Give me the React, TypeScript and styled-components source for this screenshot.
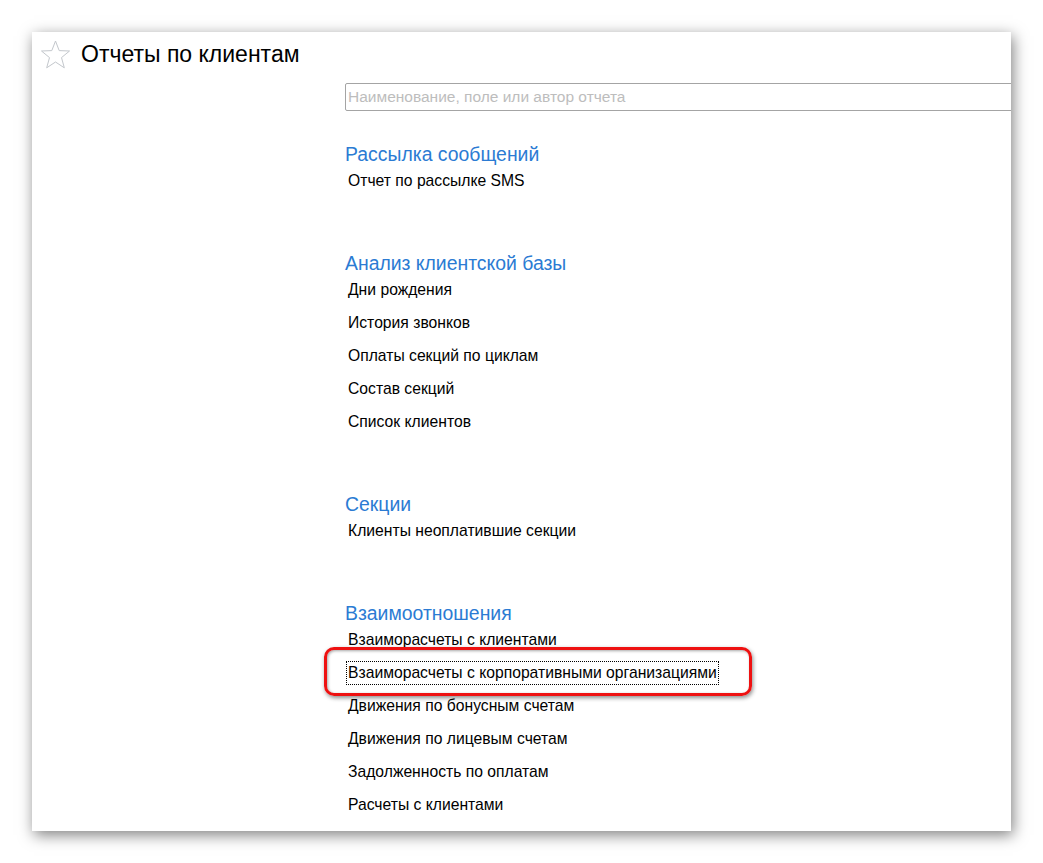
import React from "react";
import styled, { createGlobalStyle } from "styled-components";

const Global = createGlobalStyle`
  html, body { margin: 0; padding: 0; background: #fff; }
  body { font-family: "Liberation Sans", Arial, sans-serif; }
  * { box-sizing: border-box; }
`;

const Page = styled.div`
  width: 1043px;
  height: 863px;
  padding: 32px 0 0 32px;
  background: #fff;
`;

const Panel = styled.div`
  width: 979px;
  height: 799px;
  background: #fff;
  box-shadow: 2px 4px 14px rgba(0, 0, 0, 0.5);
  overflow: hidden;
  display: flex;
  flex-direction: column;
`;

const TitleBar = styled.div`
  display: flex;
  align-items: center;
  gap: 10px;
  height: 44px;
  padding: 0 0 0 8px;
`;

const Title = styled.h1`
  margin: 0;
  font-size: 23px;
  font-weight: normal;
  color: #000;
  line-height: 44px;
`;

const Content = styled.div`
  display: flex;
  flex-direction: column;
  padding-left: 313px;
  padding-top: 7px;
`;

const Search = styled.input`
  width: 700px;
  height: 28px;
  border: 1px solid #a4a4a4;
  border-radius: 2px;
  padding: 0 2px;
  font-family: "Liberation Sans", Arial, sans-serif;
  font-size: 15.5px;
  color: #000;
  outline: none;
  margin-bottom: 33px;
  &::placeholder { color: #bdbdbd; }
`;

const Section = styled.div`
  display: flex;
  flex-direction: column;
  margin-bottom: 56px;
`;

const SectionTitle = styled.div`
  font-size: 19.4px;
  height: 20px;
  line-height: 20px;
  color: #2b7bd3;
`;

const Item = styled.div`
  height: 33px;
  line-height: 33px;
  padding-left: 3px;
  font-size: 15.7px;
  color: #000;
`;

const ItemText = styled.span<{ $focused?: boolean }>`
  position: relative;
  display: inline-block;
  line-height: 22px;
  padding: 0 1px;
  margin-left: -1px;
  outline: ${(p) => (p.$focused ? "1px dotted #000" : "none")};
  outline-offset: 0;
`;

const Highlight = styled.span`
  position: absolute;
  left: -23px;
  right: -34px;
  top: -15px;
  bottom: -12px;
  border: 3px solid #ee1111;
  border-radius: 10px;
  box-shadow: 1px 2px 4px rgba(0, 0, 0, 0.45), inset 1px 1px 3px rgba(0, 0, 0, 0.35);
  pointer-events: none;
`;

const StarIcon = () => (
  <svg width="31" height="29" viewBox="0 0 31 29">
    <polygon
      points="15.5,1 19.2,10.6 29.5,11 21.5,17.6 24.3,27.8 15.5,22 6.7,27.8 9.5,17.6 1.5,11 11.8,10.6"
      fill="none"
      stroke="#c3c7cc"
      strokeWidth="1"
      strokeLinejoin="miter"
    />
  </svg>
);

type Sec = { title: string; items: string[] };

const sections: Sec[] = [
  { title: "Рассылка сообщений", items: ["Отчет по рассылке SMS"] },
  {
    title: "Анализ клиентской базы",
    items: [
      "Дни рождения",
      "История звонков",
      "Оплаты секций по циклам",
      "Состав секций",
      "Список клиентов",
    ],
  },
  { title: "Секции", items: ["Клиенты неоплатившие секции"] },
  {
    title: "Взаимоотношения",
    items: [
      "Взаиморасчеты с клиентами",
      "Взаиморасчеты с корпоративными организациями",
      "Движения по бонусным счетам",
      "Движения по лицевым счетам",
      "Задолженность по оплатам",
      "Расчеты с клиентами",
    ],
  },
];

const FOCUSED = "Взаиморасчеты с корпоративными организациями";

export default function App() {
  return (
    <Page>
      <Global />
      <Panel>
        <TitleBar>
          <StarIcon />
          <Title>Отчеты по клиентам</Title>
        </TitleBar>
        <Content>
          <Search placeholder="Наименование, поле или автор отчета" />
          {sections.map((s) => (
            <Section key={s.title}>
              <SectionTitle>{s.title}</SectionTitle>
              {s.items.map((it) => (
                <Item key={it}>
                  <ItemText $focused={it === FOCUSED}>
                    {it}
                    {it === FOCUSED && <Highlight />}
                  </ItemText>
                </Item>
              ))}
            </Section>
          ))}
        </Content>
      </Panel>
    </Page>
  );
}
